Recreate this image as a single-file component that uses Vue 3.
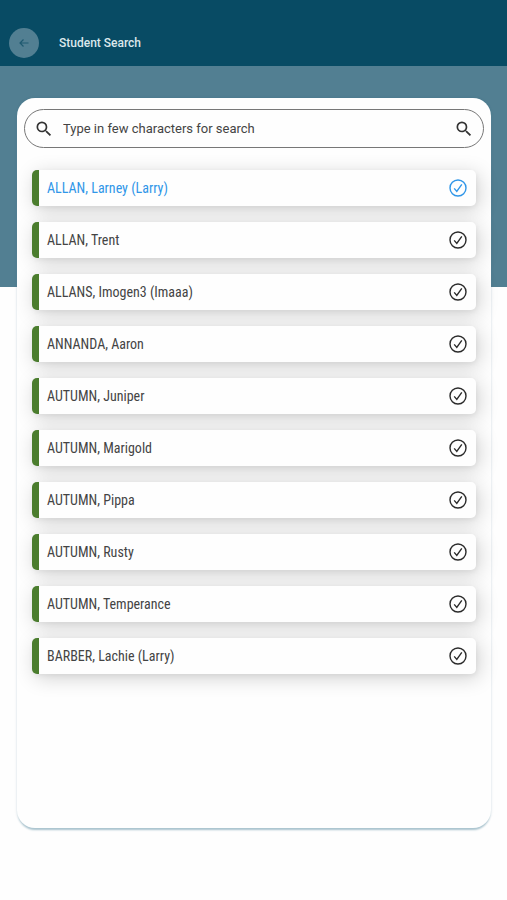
<script setup>
import { ref } from 'vue'

const query = ref('')
const selected = ref(0)
const students = [
  'ALLAN, Larney (Larry)',
  'ALLAN, Trent',
  'ALLANS, Imogen3 (Imaaa)',
  'ANNANDA, Aaron',
  'AUTUMN, Juniper',
  'AUTUMN, Marigold',
  'AUTUMN, Pippa',
  'AUTUMN, Rusty',
  'AUTUMN, Temperance',
  'BARBER, Lachie (Larry)',
]
</script>

<template>
  <div class="page">
    <header class="bar">
      <button class="back" type="button" aria-label="Back">
        <svg viewBox="0 0 24 24" width="12" height="12" fill="none" stroke="currentColor" stroke-width="2.4">
          <path d="M21 12H4M11 5l-7 7 7 7" />
        </svg>
      </button>
      <h1 class="title">Student Search</h1>
    </header>

    <main class="content">
      <section class="card">
        <form class="search" role="search" @submit.prevent>
          <label class="icon" for="student-query" aria-label="Student name">
            <svg viewBox="0 0 24 24" width="20" height="20" fill="currentColor">
              <path d="M15.5 14h-.79l-.28-.27A6.47 6.47 0 0 0 16 9.5 6.5 6.5 0 1 0 9.5 16c1.61 0 3.09-.59 4.23-1.57l.27.28v.79l5 4.99L20.49 19l-4.99-5zm-6 0C7.01 14 5 11.99 5 9.5S7.01 5 9.5 5 14 7.01 14 9.5 11.99 14 9.5 14z" />
            </svg>
          </label>
          <input id="student-query" v-model="query" class="field" type="text" placeholder="Type in few characters for search" />
          <button class="icon" type="submit" aria-label="Search">
            <svg viewBox="0 0 24 24" width="20" height="20" fill="currentColor">
              <path d="M15.5 14h-.79l-.28-.27A6.47 6.47 0 0 0 16 9.5 6.5 6.5 0 1 0 9.5 16c1.61 0 3.09-.59 4.23-1.57l.27.28v.79l5 4.99L20.49 19l-4.99-5zm-6 0C7.01 14 5 11.99 5 9.5S7.01 5 9.5 5 14 7.01 14 9.5 11.99 14 9.5 14z" />
            </svg>
          </button>
        </form>

        <ul class="list">
          <li v-for="(name, i) in students" :key="name">
            <button
              type="button"
              class="row"
              :class="{ active: i === selected }"
              :aria-pressed="i === selected"
              @click="selected = i"
            >
              <span class="name">{{ name }}</span>
              <svg class="check" viewBox="0 0 18 18" width="18" height="18" fill="none" stroke="currentColor">
                <circle cx="9" cy="9" r="8" stroke-width="1.4" />
                <path d="M5.2 9.4l2.6 3 5-7" stroke-width="1.4" />
              </svg>
            </button>
          </li>
        </ul>
      </section>
    </main>
  </div>
</template>

<style>
body {
  margin: 0;
  background: #fefefe;
}
</style>

<style scoped>
.page {
  display: flex;
  flex-direction: column;
  min-height: 100vh;
  font-family: Roboto, sans-serif;
  color: #3a3a3a;
}
.bar {
  display: flex;
  align-items: center;
  gap: 20px;
  padding: 28px 9px 8px;
  background: #084b64;
}
.back {
  display: grid;
  place-items: center;
  width: 30px;
  height: 30px;
  padding: 0;
  border: 0;
  border-radius: 50%;
  background: #527f92;
  color: #1f5a70;
}
.title {
  margin: 0;
  font-size: 12px;
  line-height: 16px;
  font-weight: 500;
  color: #dce8ec;
}
.content {
  display: flex;
  flex: 1;
  padding: 32px 16px 72px 17px;
  background: linear-gradient(#527f92, #527f92) top / 100% 221px no-repeat;
}
.card {
  flex: 1;
  min-width: 0;
  padding: 11px 7px;
  border-radius: 18px;
  background: #fefefe;
  box-shadow: 0 3px 2px -1px #a9c3ce, 0 0 3px rgba(8, 75, 100, 0.15);
}
.search {
  display: flex;
  align-items: center;
  height: 37px;
  padding: 0 9px;
  border: 1px solid #777;
  border-radius: 20px;
}
.icon {
  display: flex;
  padding: 0;
  border: 0;
  background: none;
  color: #333;
}
.field {
  flex: 1;
  min-width: 0;
  padding: 0 9px;
  border: 0;
  outline: 0;
  background: none;
  font: 400 13px/18px Roboto, sans-serif;
  color: #444;
}
.field::placeholder {
  color: #444;
  opacity: 1;
}
.list {
  display: flex;
  flex-direction: column;
  gap: 16px;
  margin: 0;
  padding: 22px 8px;
  list-style: none;
}
.row {
  display: flex;
  align-items: center;
  justify-content: space-between;
  width: 100%;
  height: 36px;
  padding: 0 9px 0 8px;
  border: 0;
  border-left: 7px solid #4b7d2e;
  border-radius: 5px;
  background: #fefefe;
  box-shadow: 3px 4px 20px rgba(0, 0, 0, 0.18), 1px 2px 5px rgba(0, 0, 0, 0.05);
  color: #444;
  text-align: left;
}
li {
  position: relative;
}
.name {
  font: 400 14px/18px "Roboto Condensed", Roboto, sans-serif;
}
.check {
  color: #2b2b2b;
}
.active,
.active .check {
  color: #3096e8;
}
</style>
